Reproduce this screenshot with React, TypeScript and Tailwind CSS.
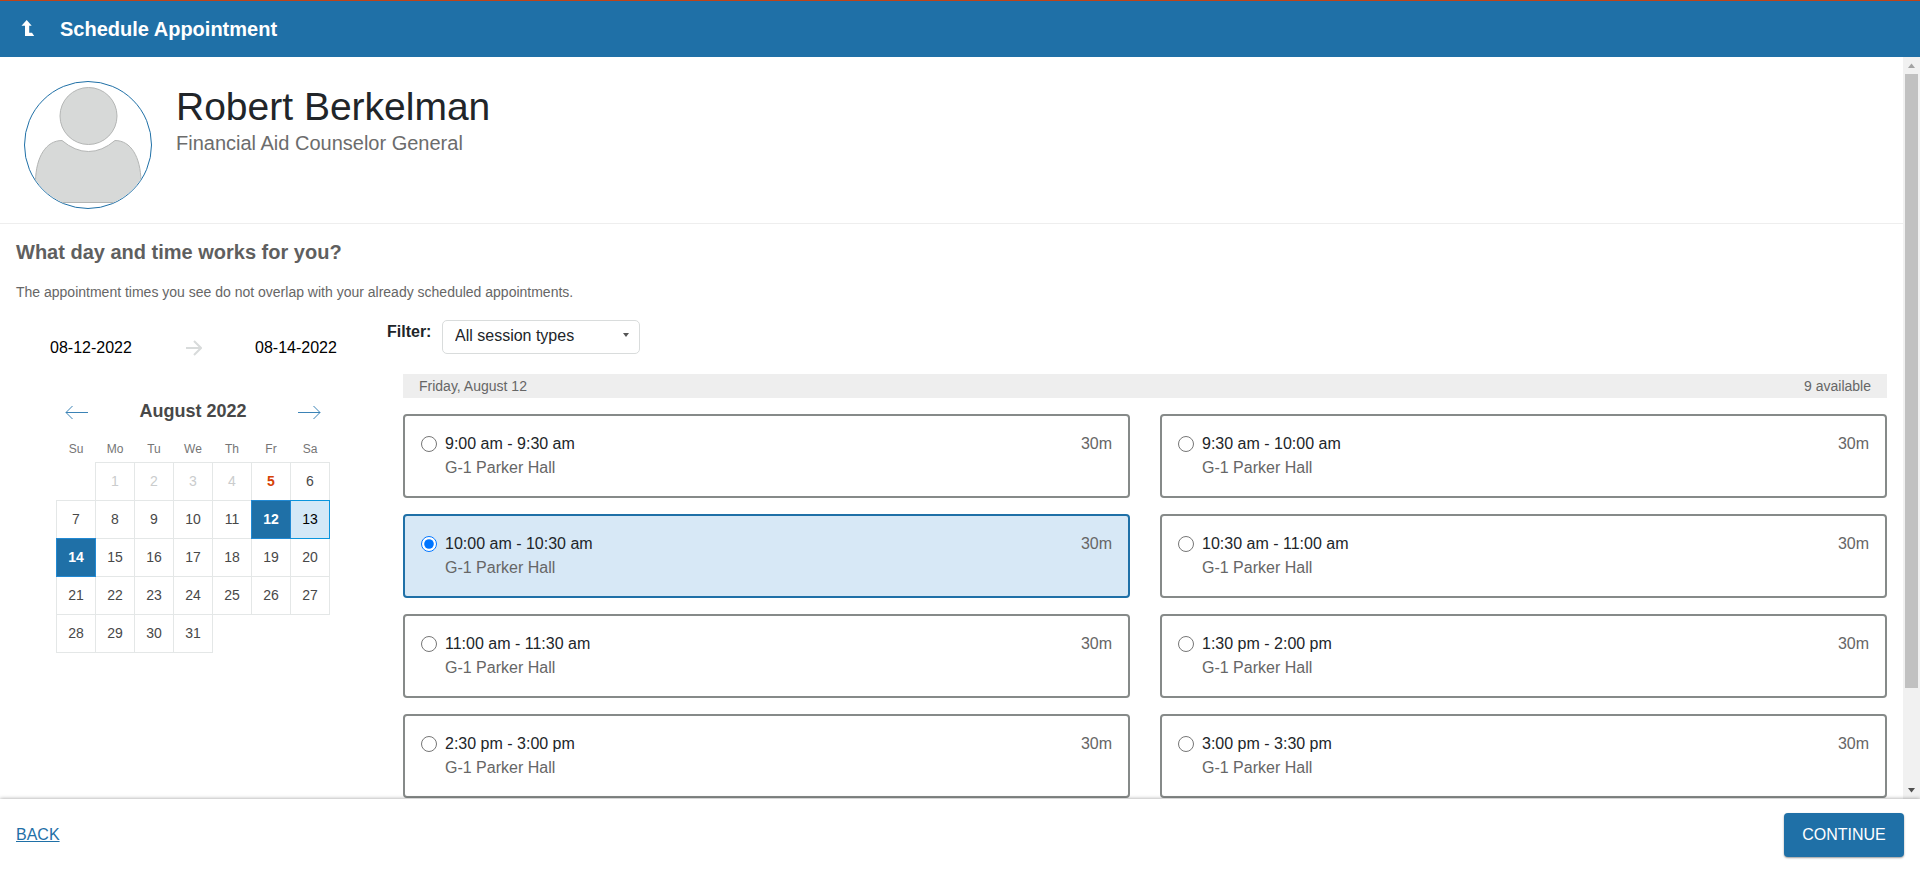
import { useState } from "react";

const slots = [
  "9:00 am - 9:30 am",
  "9:30 am - 10:00 am",
  "10:00 am - 10:30 am",
  "10:30 am - 11:00 am",
  "11:00 am - 11:30 am",
  "1:30 pm - 2:00 pm",
  "2:30 pm - 3:00 pm",
  "3:00 pm - 3:30 pm",
];

const weekdays = ["Su", "Mo", "Tu", "We", "Th", "Fr", "Sa"];

// August 2022 starts on a Monday, 0 is an empty cell
const weeks = [
  [0, 1, 2, 3, 4, 5, 6],
  [7, 8, 9, 10, 11, 12, 13],
  [14, 15, 16, 17, 18, 19, 20],
  [21, 22, 23, 24, 25, 26, 27],
  [28, 29, 30, 31, 0, 0, 0],
];

// double borders win over the solid ones of the neighbouring cells
const dayClass = (day: number) => {
  if (day === 0) return "";
  if (day === 12 || day === 14)
    return "border border-double border-[#2189d3] bg-[#1f70a7] font-bold text-white";
  if (day === 13)
    return "border border-double border-[#0a95dd] bg-[#d3e8f7] text-black";
  if (day === 5) return "border border-[#e4e7e7] font-bold text-[#d64206]";
  if (day < 5) return "border border-[#e4e7e7] text-[#cacccd]";
  return "border border-[#e4e7e7] text-[#484848]";
};

const Header = () => (
  <header className="flex h-[57px] shrink-0 items-center border-t border-[#bf4317] bg-[#1f70a7] text-white">
    <button aria-label="Go up" className="ml-5 flex w-10">
      <svg width="16" height="18" viewBox="0 0 16 18" fill="currentColor">
        <path d="M6.700 0 11.700 5.700H9.200V12.700H12L14.200 16H5V5.700H1.500Z" />
      </svg>
    </button>
    <h1 className="text-xl font-bold">Schedule Appointment</h1>
  </header>
);

const Avatar = () => (
  <div className="h-32 w-32 shrink-0 overflow-hidden rounded-full border border-[#1f70a7]">
    <svg
      viewBox="1 1 126 126"
      className="h-full w-full"
      fill="#d7d9d8"
      stroke="#b3b5b4"
    >
      <circle cx="64.5" cy="35" r="28.5" />
      <path d="M11.500 121.500V100C12 76 22 59.500 38 59.500Q51 70.500 64.500 70.500T91 59.500C107 59.500 116.500 76 117 100V121.500Z" />
    </svg>
  </div>
);

const Profile = () => (
  <section className="flex gap-6 border-b border-[#eeeeee] px-6 pt-6 pb-3.5">
    <Avatar />
    <div>
      <h2 className="text-[39px] leading-[51px] text-[#212529]">
        Robert Berkelman
      </h2>
      <p className="text-xl leading-[22px] text-[#6c6c6c]">
        Financial Aid Counselor General
      </p>
    </div>
  </section>
);

const LongArrow = ({ d }: { d: string }) => (
  <svg width="24" height="18" viewBox="0 0 24 18" fill="none" stroke="#3b83b6">
    <path d={d} />
  </svg>
);

const Calendar = () => (
  <div className="w-[371px] shrink-0">
    <div className="flex items-center pt-4 pl-[34px] text-base text-black">
      <span className="w-[136px]">08-12-2022</span>
      <svg
        className="mr-[53px]"
        width="16"
        height="16"
        viewBox="0 0 16 16"
        fill="none"
        stroke="#d8dbdb"
        strokeWidth="2"
      >
        <path d="M0 8H15M8 1l7 7-7 7" />
      </svg>
      <span>08-14-2022</span>
    </div>
    <div className="mt-[39px] ml-10 flex w-[274px] items-center justify-between px-[9px]">
      <button aria-label="Previous month">
        <LongArrow d="M1 10.500H23M7.500 4 1 10.500l6.500 6.500" />
      </button>
      <strong className="text-lg leading-6 text-[#484848]">August 2022</strong>
      <button aria-label="Next month">
        <LongArrow d="M1 10.500H23M16.500 4l6.500 6.500-6.500 6.500" />
      </button>
    </div>
    <table className="mt-[13px] ml-10 w-[274px] table-fixed border-collapse text-center text-sm">
      <thead>
        <tr className="h-[26px] text-xs text-[#757575]">
          {weekdays.map((name) => (
            <th key={name} className="p-0 font-normal">
              {name}
            </th>
          ))}
        </tr>
      </thead>
      <tbody>
        {weeks.map((week, i) => (
          <tr key={i} className="h-[38px]">
            {week.map((day, j) => (
              <td key={j} className={`p-0 ${dayClass(day)}`}>
                {day > 0 && <button>{day}</button>}
              </td>
            ))}
          </tr>
        ))}
      </tbody>
    </table>
  </div>
);

const Filter = () => (
  <div className="flex items-start text-base leading-6">
    <label htmlFor="session" className="w-[55px] font-bold text-[#212529]">
      Filter:
    </label>
    <div className="relative">
      <select
        id="session"
        className="h-[34px] w-[198px] appearance-none rounded-[5px] border border-[#d9dcdc] bg-white px-3 pb-0.5 text-[#212529]"
      >
        <option>All session types</option>
      </select>
      <svg
        className="pointer-events-none absolute top-[13px] right-[11px]"
        width="6"
        height="4"
        fill="#555"
      >
        <path d="M0 0H6L3 4Z" />
      </svg>
    </div>
  </div>
);

const Slot = ({
  time,
  selected,
  onSelect,
}: {
  time: string;
  selected: boolean;
  onSelect: () => void;
}) => (
  <label
    className={`flex items-start gap-2 rounded-[4px] border-2 p-4 text-base leading-6 ${
      selected
        ? "border-[#1f70a7] bg-[#d7e8f6]"
        : "border-[#868a89] bg-white"
    }`}
  >
    <input
      type="radio"
      name="slot"
      className="mt-1 h-4 w-4 shrink-0"
      checked={selected}
      onChange={onSelect}
    />
    <span className="flex-1">
      <span className="block text-[#212529]">{time}</span>
      <span className="block text-[#666666]">G-1 Parker Hall</span>
    </span>
    <span className="text-[#666666]">30m</span>
  </label>
);

const Times = () => {
  const [selected, setSelected] = useState(slots[2]);

  return (
    <div className="min-w-0 flex-1">
      <Filter />
      <div className="mt-5 ml-4">
        <div className="flex justify-between bg-[#eeeeee] px-4 text-sm leading-6 text-[#666666]">
          <span>Friday, August 12</span>
          <span>9 available</span>
        </div>
        <div className="mt-4 grid grid-cols-2 gap-x-[30px] gap-y-4">
          {slots.map((time) => (
            <Slot
              key={time}
              time={time}
              selected={time === selected}
              onSelect={() => setSelected(time)}
            />
          ))}
        </div>
      </div>
    </div>
  );
};

const ScrollTrack = () => (
  <div
    aria-hidden="true"
    className="flex w-[17px] shrink-0 flex-col items-center justify-between bg-[#f1f1f1]"
  >
    <svg width="17" height="17" fill="#a3a3a3">
      <path d="M5 11H12L8.500 6.500Z" />
    </svg>
    <div className="w-[13px] flex-1">
      <div className="h-13/15 bg-[#c1c1c1]" />
    </div>
    <svg width="17" height="17" fill="#505050">
      <path d="M5 6H12L8.500 10.500Z" />
    </svg>
  </div>
);

const Footer = () => (
  <footer className="relative flex shrink-0 items-center justify-between bg-white px-4 pt-3.5 pb-[13px] shadow-[0_0_4px_rgba(0,0,0,0.4)]">
    <a href="#back" className="text-base text-[#1f70a7] underline">
      BACK
    </a>
    <button className="h-11 w-[120px] rounded-[4px] bg-[#1f70a7] text-base text-white shadow-[0_1px_2px_rgba(0,0,0,0.4)]">
      CONTINUE
    </button>
  </footer>
);

const App = () => {
  return (
    <div className="flex h-screen flex-col bg-white font-['Liberation_Sans',Arial,sans-serif]">
      <Header />
      <div className="flex min-h-0 flex-1">
        <main className="min-w-0 flex-1 overflow-y-auto">
          <Profile />
          <section className="px-4 pt-4">
            <h3 className="text-xl leading-6 font-bold text-[#5f5f5f]">
              What day and time works for you?
            </h3>
            <p className="mt-4 text-sm leading-6 text-[#666666]">
              The appointment times you see do not overlap with your already
              scheduled appointments.
            </p>
            <div className="mt-4 flex">
              <Calendar />
              <Times />
            </div>
          </section>
        </main>
        <ScrollTrack />
      </div>
      <Footer />
    </div>
  );
};

export default App;
